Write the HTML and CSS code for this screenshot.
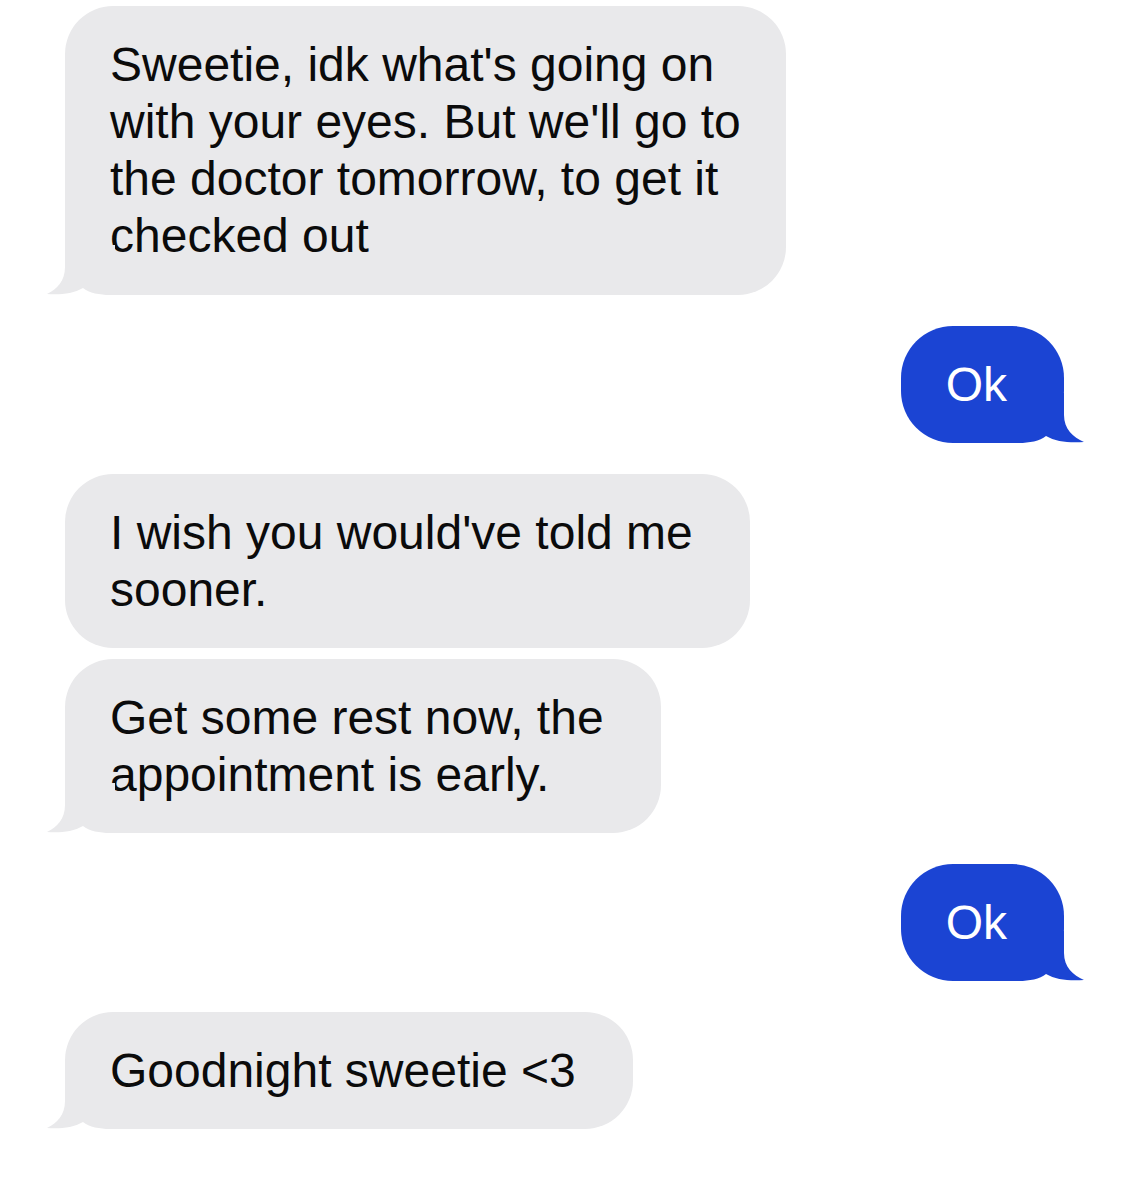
FILE: index.html
```html
<!DOCTYPE html>
<html lang="en">
<head>
<meta charset="utf-8">
<title>Messages</title>
<link rel="stylesheet" href="styles.css">
</head>
<body>
<main class="thread">
  <div class="row row-in">
    <div class="bubble in tail wide">Sweetie, idk what's going on<br>with your eyes. But we'll go to<br>the doctor tomorrow, to get it<br>checked out
      <svg class="tail-svg" viewBox="0 0 70 50" width="70" height="50" aria-hidden="true"><path d="M20,0 H70 V50 H65 C55,50 44,48 38,43 C28,49 14,50 2,49 C12,44 20,36 20,22 Z"/></svg>
    </div>
  </div>
  <div class="row row-out">
    <div class="bubble out tail">Ok
      <svg class="tail-svg" viewBox="0 0 70 50" width="70" height="50" aria-hidden="true"><path d="M20,0 H70 V50 H65 C55,50 44,48 38,43 C28,49 14,50 0,49 C11,44 20,36 20,22 Z"/></svg>
    </div>
  </div>
  <div class="row row-in group">
    <div class="bubble in">I wish you would've told me<br>sooner.</div>
    <div class="bubble in tail">Get some rest now, the<br>appointment is early.
      <svg class="tail-svg" viewBox="0 0 70 50" width="70" height="50" aria-hidden="true"><path d="M20,0 H70 V50 H65 C55,50 44,48 38,43 C28,49 14,50 2,49 C12,44 20,36 20,22 Z"/></svg>
    </div>
  </div>
  <div class="row row-out">
    <div class="bubble out tail">Ok
      <svg class="tail-svg" viewBox="0 0 70 50" width="70" height="50" aria-hidden="true"><path d="M20,0 H70 V50 H65 C55,50 44,48 38,43 C28,49 14,50 0,49 C11,44 20,36 20,22 Z"/></svg>
    </div>
  </div>
  <div class="row row-in">
    <div class="bubble in tail">Goodnight sweetie &lt;3
      <svg class="tail-svg" viewBox="0 0 70 50" width="70" height="50" aria-hidden="true"><path d="M20,0 H70 V50 H65 C55,50 44,48 38,43 C28,49 14,50 2,49 C12,44 20,36 20,22 Z"/></svg>
    </div>
  </div>
</main>
</body>
</html>
```
FILE: styles.css
```css
html, body {
  margin: 0;
  padding: 0;
  background: #ffffff;
}

body {
  font-family: "Liberation Sans", Arial, sans-serif;
  width: 1125px;
  height: 1178px;
  overflow: hidden;
}

.thread {
  display: flex;
  flex-direction: column;
  gap: 31px;
  padding: 6px 61px 0 65px;
}

.row {
  display: flex;
  flex-direction: column;
}

.row-in {
  align-items: flex-start;
}

.row-out {
  align-items: flex-end;
}

.group {
  gap: 11px;
}

.bubble {
  position: relative;
  font-size: 48px;
  line-height: 57px;
  padding: 30px 57px 30px 45px;
  border-radius: 48px;
  white-space: nowrap;
}

.bubble.wide {
  padding-right: 45px;
  padding-bottom: 31px;
}

.in {
  background: #e9e9eb;
  color: #0b0b0b;
}

.out {
  background: #1b44d3;
  color: #ffffff;
  border-radius: 52px;
}

.tail-svg {
  position: absolute;
  bottom: 0;
  display: block;
}

.in .tail-svg {
  left: -20px;
  fill: #e9e9eb;
}

.out .tail-svg {
  right: -20px;
  fill: #1b44d3;
  transform: scaleX(-1);
}
```
